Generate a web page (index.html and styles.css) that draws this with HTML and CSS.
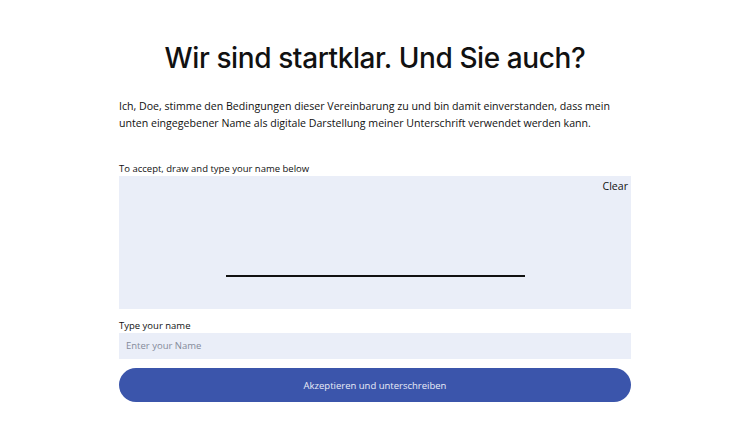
FILE: index.html
```html
<!DOCTYPE html>
<html lang="de">
<head>
<meta charset="utf-8">
<link rel="stylesheet" href="styles.css">
</head>
<body>
<main class="wrap">
  <h1 class="title">Wir sind startklar. Und Sie auch?</h1>
  <p class="intro">Ich, Doe, stimme den Bedingungen dieser Vereinbarung zu und bin damit einverstanden, dass mein unten eingegebener Name als digitale Darstellung meiner Unterschrift verwendet werden kann.</p>
  <div class="label sig-label">To accept, draw and type your name below</div>
  <div class="sig">
    <div class="clear">Clear</div>
    <div class="sig-line"></div>
  </div>
  <div class="label name-label">Type your name</div>
  <div class="input">Enter your Name</div>
  <button class="btn">Akzeptieren und unterschreiben</button>
</main>
</body>
</html>
```
FILE: styles.css
```css
html, body { margin: 0; padding: 0; background: #fff; }
body { font-family: "Open Sans", "Liberation Sans", sans-serif; color: #111; }
.wrap { width: 512px; margin: 0 auto; padding-top: 38px; display: flex; flex-direction: column; }
.title { font-family: "Inter", "Lato", sans-serif; font-weight: 500; font-size: 28px; letter-spacing: -0.4px; text-align: center; margin: 0; line-height: 40px; color: #111; }
.intro { margin: 20px 0 0; font-size: 10.6px; line-height: 17px; color: #111; }
.label { font-size: 9.5px; line-height: 13px; color: #111; }
.sig-label { margin-top: 30px; }
.sig { height: 133px; background: #eaeef8; margin-top: 1px; display: flex; flex-direction: column; align-items: center; }
.clear { align-self: flex-end; margin: 3px 3px 0 0; font-size: 10.6px; line-height: 14px; }
.sig-line { width: 299px; height: 2px; background: #111; margin-top: 82px; margin-left: 0; }
.name-label { margin-top: 10px; }
.input { margin-top: 1px; height: 26px; background: #eaeef8; color: #858b9a; font-size: 9.5px; line-height: 26px; padding-left: 7px; }
.btn { margin-top: 9px; height: 34px; border: none; border-radius: 17px; background: #3b55ab; color: #e9ecf7; font-family: "Open Sans", sans-serif; font-size: 9.5px; padding: 0; }
```
